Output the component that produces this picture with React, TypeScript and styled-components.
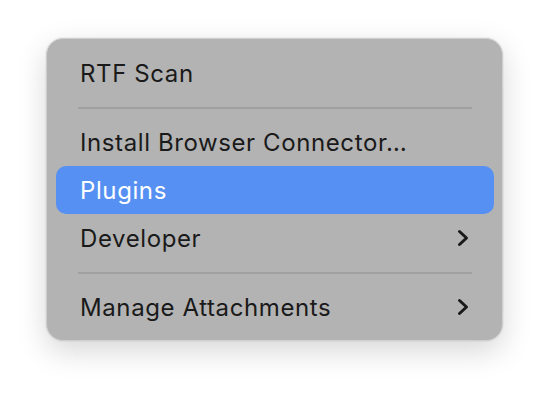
import styled, {createGlobalStyle} from "styled-components";

const GlobalStyle = createGlobalStyle`
  html, body {
    margin: 0;
    padding: 0;
    background: #ffffff;
  }
  body {
    font-family: Inter, "Liberation Sans", sans-serif;
  }
`;

const Page = styled.div`
  width: 550px;
  height: 396px;
  box-sizing: border-box;
  padding: 38px 0 0 46px;
`;

const Menu = styled.div`
  width: 457px;
  height: 303px;
  box-sizing: border-box;
  padding: 10px 8px 10px 9px;
  background: #b3b3b3;
  border: 1px solid #cfcfcf;
  border-radius: 17px;
  box-shadow: 0 0 0 1px rgba(0, 0, 0, 0.04), 0 10px 30px rgba(0, 0, 0, 0.16);
  display: flex;
  flex-direction: column;
`;

const Item = styled.div<{$active?: boolean}>`
  height: 48px;
  flex: none;
  display: flex;
  align-items: center;
  justify-content: space-between;
  padding: 0 25px 0 24px;
  border-radius: 10px;
  font-size: 24px;
  letter-spacing: 0.6px;
  color: ${(p) => (p.$active ? "#ffffff" : "#1a1a1a")};
  background: ${(p) => (p.$active ? "#5590f2" : "transparent")};
`;

const Separator = styled.div`
  height: 21px;
  flex: none;
  display: flex;
  align-items: center;
  padding: 0 22px;

  &::after {
    content: "";
    flex: 1;
    height: 2px;
    background: #a0a0a0;
  }
`;

function Chevron() {
  return (
    <svg width="12" height="18" viewBox="0 0 12 18" fill="none">
      <path d="M2.5 2.5 L9.5 9 L2.5 15.5" stroke="#1a1a1a" strokeWidth="3" strokeLinecap="round" strokeLinejoin="round"/>
    </svg>
  );
}

export default function App() {
  return (
    <Page>
      <GlobalStyle/>
      <Menu>
        <Item>RTF Scan</Item>
        <Separator/>
        <Item>Install Browser Connector…</Item>
        <Item $active>Plugins</Item>
        <Item>Developer<Chevron/></Item>
        <Separator/>
        <Item>Manage Attachments<Chevron/></Item>
      </Menu>
    </Page>
  );
}
